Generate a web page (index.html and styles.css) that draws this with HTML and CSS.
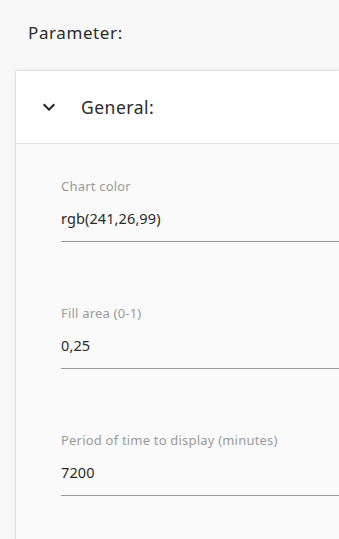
FILE: index.html
```html
<!DOCTYPE html>
<html>
<head>
<meta charset="utf-8">
<link rel="stylesheet" href="styles.css">
</head>
<body>
<div class="page">
  <div class="title">Parameter:</div>
  <div class="card">
    <div class="card-header">
      <svg class="chevron" width="24" height="24" viewBox="0 0 24 24"><path d="M16.59 8.59L12 13.17 7.41 8.59 6 10l6 6 6-6z" fill="#222"/></svg>
      <span class="card-title">General:</span>
    </div>
    <div class="card-body">
      <div class="field">
        <div class="label">Chart color</div>
        <div class="value">rgb(241,26,99)</div>
      </div>
      <div class="field">
        <div class="label">Fill area (0-1)</div>
        <div class="value">0,25</div>
      </div>
      <div class="field">
        <div class="label">Period of time to display (minutes)</div>
        <div class="value">7200</div>
      </div>
    </div>
  </div>
</div>
</body>
</html>
```
FILE: styles.css
```css
html, body {
  margin: 0;
  padding: 0;
  background: #f8f8f8;
  overflow: hidden;
  height: 539px;
}
.page {
  font-family: "Noto Sans", "Open Sans", sans-serif;
  color: #222;
}
.title {
  font-size: 17px;
  line-height: 22px;
  letter-spacing: 0.6px;
  color: #2a2a2a;
  padding: 22px 0 0 28px;
  box-sizing: border-box;
  height: 71px;
}
.card {
  margin-left: 16px;
  width: calc(100vw - 16px);
  background: #fafafa;
  box-shadow: 0 0 3px rgba(0,0,0,0.22);
  height: 480px;
}
.card-header {
  display: flex;
  align-items: center;
  height: 72px;
  background: #fff;
  border-bottom: 1px solid #e2e2e2;
  padding-left: 21px;
}
.chevron {
  flex: none;
}
.card-title {
  margin-left: 20px;
  font-size: 17.5px;
  color: #2a2a2a;
  letter-spacing: 0.5px;
}
.card-body {
  padding: 34px 0 0 45px;
  display: flex;
  flex-direction: column;
  gap: 63px;
}
.field {
  border-bottom: 1px solid #9a9a9a;
  padding-bottom: 13px;
}
.label {
  font-size: 13px;
  line-height: 16px;
  letter-spacing: 0.2px;
  color: #9b9b9b;
}
.value {
  margin-top: 14px;
  font-size: 14.5px;
  line-height: 20px;
  letter-spacing: 0.1px;
  color: #2a2a2a;
}
```
